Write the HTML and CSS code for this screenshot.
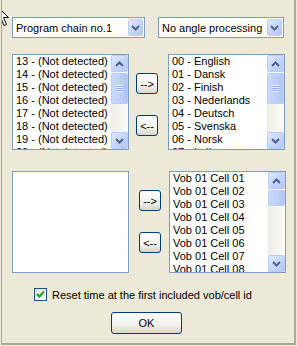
FILE: index.html
```html
<!DOCTYPE html>
<html lang="en">
  <head>
    <meta charset="UTF-8" />
    <title>Program chain</title>
    <link rel="stylesheet" href="styles.css">
  </head>
  <body>
    <div class="dialog">
      <!-- mouse pointer left over the window -->
      <svg class="cursor" width="12" height="28" viewBox="0 0 12 28">
        <path d="M-4 6 L7.5 17.5 L2.5 17.5 L5.5 24.5 L3 25.5 L0 18.5 L-4 22.5 Z" fill="#fff" stroke="#000" stroke-width="1" />
      </svg>

      <div class="top-row">
        <div class="combo combo-chain">
          <span class="combo-text">Program chain no.1</span>
          <span class="combo-btn"><svg width="9" height="6" viewBox="0 0 9 6"><polyline points="1,1 4.5,4.5 8,1" fill="none" stroke="#4d6185" stroke-width="2" /></svg></span>
        </div>
        <div class="combo combo-angle">
          <span class="combo-text">No angle processing</span>
          <span class="combo-btn"><svg width="9" height="6" viewBox="0 0 9 6"><polyline points="1,1 4.5,4.5 8,1" fill="none" stroke="#4d6185" stroke-width="2" /></svg></span>
        </div>
      </div>

      <div class="pick-row pick-titles">
        <div class="listbox">
          <ul class="items">
            <li>13 - (Not detected)</li>
            <li>14 - (Not detected)</li>
            <li>15 - (Not detected)</li>
            <li>16 - (Not detected)</li>
            <li>17 - (Not detected)</li>
            <li>18 - (Not detected)</li>
            <li>19 - (Not detected)</li>
            <li>20 - (Not detected)</li>
          </ul>
          <div class="vscroll">
            <span class="sb-btn"><svg width="9" height="6" viewBox="0 0 9 6"><polyline points="1,5 4.5,1.5 8,5" fill="none" stroke="#4d6185" stroke-width="2" /></svg></span>
            <span class="sb-track"><span class="sb-thumb thumb-titles"><i></i></span></span>
            <span class="sb-btn"><svg width="9" height="6" viewBox="0 0 9 6"><polyline points="1,1 4.5,4.5 8,1" fill="none" stroke="#4d6185" stroke-width="2" /></svg></span>
          </div>
        </div>
        <div class="move-btns">
          <button class="xp-btn move">--&gt;</button>
          <button class="xp-btn move">&lt;--</button>
        </div>
        <div class="listbox">
          <ul class="items">
            <li>00 - English</li>
            <li>01 - Dansk</li>
            <li>02 - Finish</li>
            <li>03 - Nederlands</li>
            <li>04 - Deutsch</li>
            <li>05 - Svenska</li>
            <li>06 - Norsk</li>
            <li>07 - Italiano</li>
          </ul>
          <div class="vscroll">
            <span class="sb-btn"><svg width="9" height="6" viewBox="0 0 9 6"><polyline points="1,5 4.5,1.5 8,5" fill="none" stroke="#4d6185" stroke-width="2" /></svg></span>
            <span class="sb-track"><span class="sb-thumb thumb-titles"><i></i></span></span>
            <span class="sb-btn"><svg width="9" height="6" viewBox="0 0 9 6"><polyline points="1,1 4.5,4.5 8,1" fill="none" stroke="#4d6185" stroke-width="2" /></svg></span>
          </div>
        </div>
      </div>

      <div class="pick-row pick-cells">
        <div class="listbox">
          <ul class="items"></ul>
        </div>
        <div class="move-btns">
          <button class="xp-btn move">--&gt;</button>
          <button class="xp-btn move">&lt;--</button>
        </div>
        <div class="listbox">
          <ul class="items">
            <li>Vob 01 Cell 01</li>
            <li>Vob 01 Cell 02</li>
            <li>Vob 01 Cell 03</li>
            <li>Vob 01 Cell 04</li>
            <li>Vob 01 Cell 05</li>
            <li>Vob 01 Cell 06</li>
            <li>Vob 01 Cell 07</li>
            <li>Vob 01 Cell 08</li>
          </ul>
          <div class="vscroll">
            <span class="sb-btn"><svg width="9" height="6" viewBox="0 0 9 6"><polyline points="1,5 4.5,1.5 8,5" fill="none" stroke="#4d6185" stroke-width="2" /></svg></span>
            <span class="sb-track"><span class="sb-thumb thumb-cells"></span></span>
            <span class="sb-btn"><svg width="9" height="6" viewBox="0 0 9 6"><polyline points="1,1 4.5,4.5 8,1" fill="none" stroke="#4d6185" stroke-width="2" /></svg></span>
          </div>
        </div>
      </div>

      <label class="check-row">
        <span class="checkbox"><svg width="9" height="9" viewBox="0 0 9 9"><polyline points="1,4 3.5,6.5 8,1.5" fill="none" stroke="#21a121" stroke-width="2" /></svg></span>
        <span>Reset time at the first included vob/cell id</span>
      </label>

      <div class="ok-row">
        <button class="xp-btn ok">OK</button>
      </div>
    </div>
  </body>
</html>
```

FILE: styles.css
```css
* {
  margin: 0;
  padding: 0;
  box-sizing: border-box;
}
body {
  background: #ece9d8;
  font-family: "Liberation Sans", Arial, sans-serif;
  font-size: 11px;
  color: #000;
}
.dialog {
  position: relative;
  margin-left: 1px;
  width: 295px;
  height: 345px;
  border-left: 1px solid #aca899;
  border-right: 2px solid #aca899;
  border-bottom: 2px solid #aca899;
  padding: 17px 0 0 10px;
  overflow: hidden;
}
.cursor {
  position: absolute;
  left: -1px;
  top: 0;
}

/* combo boxes */
.top-row {
  display: flex;
  gap: 13px;
}
.combo {
  display: flex;
  align-items: center;
  height: 21px;
  background: #fff;
  border: 1px solid #7f9db9;
  padding: 1px;
}
.combo-chain {
  width: 133px;
}
.combo-angle {
  width: 126px;
}
.combo-text {
  flex: 1;
  padding-left: 2px;
  white-space: nowrap;
  overflow: hidden;
}
.combo-btn,
.sb-btn {
  display: flex;
  align-items: center;
  justify-content: center;
  width: 15px;
  height: 17px;
  border: 1px solid #b9cdf8;
  border-radius: 2px;
  background: linear-gradient(135deg, #e0e9fe, #c1d3fb 60%, #b4c8f6);
}

/* list rows */
.pick-row {
  display: flex;
}
.pick-titles {
  margin-top: 16px;
  height: 96px;
}
.pick-cells {
  margin-top: 21px;
  height: 102px;
}
.listbox {
  display: flex;
  width: 117px;
  height: 100%;
  background: #fff;
  border: 1px solid #7f9db9;
}
.items {
  flex: 1;
  list-style: none;
  overflow: hidden;
  padding: 0 0 0 3px;
  line-height: 13px;
  white-space: nowrap;
}
.vscroll {
  display: flex;
  flex-direction: column;
  width: 17px;
  background: linear-gradient(90deg, #eeede5, #fbfbf8);
}
.vscroll .sb-btn {
  width: 17px;
  height: 17px;
}
.sb-track {
  flex: 1;
  padding-top: 1px;
}
.sb-thumb {
  display: flex;
  align-items: center;
  justify-content: center;
  border: 1px solid #b9cdf8;
  border-radius: 2px;
  background: linear-gradient(90deg, #c9d8fc, #bccffa 60%, #b0c5f5);
}
.thumb-titles {
  height: 31px;
}
.thumb-cells {
  height: 16px;
}
.sb-thumb i {
  width: 7px;
  height: 7px;
  background: repeating-linear-gradient(180deg, #eef4fe 0 1px, #8cb0f8 1px 2px);
}

/* arrow buttons between the lists */
.move-btns {
  display: flex;
  flex-direction: column;
  gap: 21px;
  padding-top: 19px;
}
.pick-titles .move-btns {
  margin: 0 10px 0 7px;
}
.pick-cells .move-btns {
  margin: 0 8px 0 10px;
}
.xp-btn {
  font-family: "Liberation Sans", Arial, sans-serif;
  font-size: 11px;
  color: #000;
  border: 1px solid #003c74;
  border-radius: 3px;
  background: linear-gradient(180deg, #fff, #f2f1ec 60%, #d9d5cb);
}
.move {
  width: 22px;
  height: 21px;
}

/* checkbox */
.check-row {
  display: flex;
  align-items: center;
  gap: 5px;
  margin: 15px 0 0 22px;
  height: 13px;
}
.checkbox {
  display: flex;
  align-items: center;
  justify-content: center;
  width: 13px;
  height: 13px;
  border: 1px solid #1c5180;
  background: linear-gradient(135deg, #dcdbd5, #fff);
}

.ok-row {
  margin: 11px 0 0 99px;
}
.ok {
  width: 71px;
  height: 22px;
}
```
